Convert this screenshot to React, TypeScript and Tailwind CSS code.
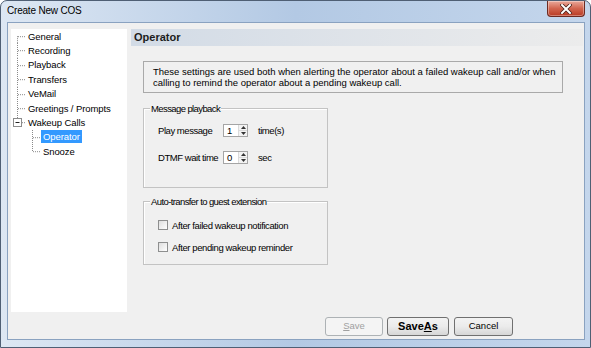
import React from "react";

const font = "font-['Liberation_Sans',Arial,sans-serif]";

type Node = { label: string; level: number; line: "first" | "mid" | "last"; box?: boolean; selected?: boolean };

const tree: Node[] = [
  { label: "General", level: 0, line: "first" },
  { label: "Recording", level: 0, line: "mid" },
  { label: "Playback", level: 0, line: "mid" },
  { label: "Transfers", level: 0, line: "mid" },
  { label: "VeMail", level: 0, line: "mid" },
  { label: "Greetings / Prompts", level: 0, line: "mid" },
  { label: "Wakeup Calls", level: 0, line: "last", box: true },
  { label: "Operator", level: 1, line: "mid", selected: true },
  { label: "Snooze", level: 1, line: "last" },
];

function Connector({ line, box }: { line: Node["line"]; box?: boolean }) {
  const y1 = line === "first" ? "50%" : "0";
  const y2 = line === "last" ? "50%" : "100%";
  return (
    <svg width="15" height="100%" className="h-full shrink-0">
      <line x1="6.5" y1={y1} x2="6.5" y2={y2} stroke="#8a8a8a" strokeDasharray="1 1" />
      <line x1="7" y1="50%" x2="15" y2="50%" stroke="#8a8a8a" strokeDasharray="1 1" transform="translate(0 0.5)" />
      {box && (
        <g>
          <rect x="2.5" y="3.5" width="8" height="8" fill="#fff" stroke="#8c8c8c" />
          <line x1="4.5" y1="7.5" x2="8.5" y2="7.5" stroke="#222" />
        </g>
      )}
    </svg>
  );
}

function Spinner({ value }: { value: string }) {
  return (
    <div className="flex h-[13px] w-[25px] border border-[#a5a5a5] bg-white">
      <span className="flex-1 pl-[3px] text-[9.5px] leading-[11px] text-black">{value}</span>
      <div className="flex w-[9px] flex-col border-l border-[#dadada] bg-[#f3f3f3]">
        <div className="flex flex-1 items-center justify-center border-b border-[#dadada]">
          <svg width="5" height="3"><path d="M0 3 L2.5 0 L5 3 Z" fill="#333" /></svg>
        </div>
        <div className="flex flex-1 items-center justify-center">
          <svg width="5" height="3"><path d="M0 0 L2.5 3 L5 0 Z" fill="#333" /></svg>
        </div>
      </div>
    </div>
  );
}

function Check({ label }: { label: string }) {
  return (
    <div className="flex h-[12px] items-center pl-[14px]">
      <div className="h-[10px] w-[10px] border border-[#8e8f8f] bg-gradient-to-br from-[#dedede] to-white" />
      <span className="ml-[4px] text-[9.5px] leading-[11px] tracking-[-0.4px] text-black">{label}</span>
    </div>
  );
}

export default function App() {
  return (
    <div className={`${font} flex h-[348px] w-[591px] flex-col overflow-hidden rounded-t-[7px] border border-[#4f5f74] bg-gradient-to-r from-[#dde7f3] via-[#b3c9e4] to-[#c4d6ec]`}>
      {/* title bar */}
      <div className="flex h-[21px] shrink-0 items-start justify-between pl-[6px] pr-[5px]">
        <span className="mt-[4px] text-[10px] leading-[12px] tracking-[-0.2px] text-black">Create New COS</span>
        <div className="flex h-[16px] w-[38px] items-center justify-center rounded-b-[4px] border border-t-0 border-[#6d2a22] bg-gradient-to-b from-[#e9a99b] via-[#d2654f] to-[#b83a23] shadow-[inset_0_0_0_1px_rgba(255,255,255,0.35)]">
          <svg width="12" height="10" viewBox="0 0 12 10">
            <path d="M2 1 L10 9 M10 1 L2 9" stroke="#4a1f18" strokeWidth="3.6" strokeLinecap="square" />
            <path d="M2 1 L10 9 M10 1 L2 9" stroke="#fff" strokeWidth="2" strokeLinecap="square" />
          </svg>
        </div>
      </div>

      {/* client area */}
      <div className="mb-[7px] ml-[6px] mr-[5px] flex flex-1 flex-col border border-[#8aa2c0] bg-[#f0f0f0] pl-[3px] pr-[1px] pt-[6px]">
        <div className="flex h-[283px] gap-[4px]">
          {/* tree */}
          <div className="w-[116px] bg-white">
            {tree.map((n) => (
              <div key={n.label} className="flex h-[14.4px] items-center">
                {n.level === 1 && <div className="w-[15px] shrink-0" />}
                <Connector line={n.line} box={n.box} />
                <span
                  className={`px-[2px] text-[9.5px] leading-[13px] tracking-[-0.1px] ${
                    n.selected ? "bg-[#3399ff] text-white" : "text-black"
                  }`}
                >
                  {n.label}
                </span>
              </div>
            ))}
          </div>

          {/* page */}
          <div className="flex w-[452px] flex-col">
            <div className="flex h-[17px] items-center bg-gradient-to-r from-[#d2dbe6] to-[#ececec] pl-[3px]">
              <span className="text-[11px] font-bold leading-[13px] text-[#1c1c1c]">Operator</span>
            </div>

            <div className="ml-[12px] mt-[15px] h-[32px] w-[420px] border border-[#a9a9a9] pl-[9px] pt-[4px] text-[9.5px] leading-[11px] text-black">
              These settings are used both when alerting the operator about a failed wakeup call and/or when
              <br />
              calling to remind the operator about a pending wakeup call.
            </div>

            <div className="ml-[12px] mt-[15px] h-[80px] w-[185px] border border-[#c3c3c3] shadow-[inset_1px_1px_0_#fff]">
              <span className="ml-[6px] -mt-[6px] block w-fit bg-[#f0f0f0] px-[1px] text-[9.5px] leading-[11px] tracking-[-0.6px] text-black">
                Message playback
              </span>
              <div className="mt-[10px] flex h-[13px] items-center pl-[14px] text-[9.5px] leading-[11px] tracking-[-0.45px] text-black">
                <span className="w-[65px]">Play message</span>
                <Spinner value="1" />
                <span className="ml-[10px]">time(s)</span>
              </div>
              <div className="mt-[14px] flex h-[13px] items-center pl-[14px] text-[9.5px] leading-[11px] tracking-[-0.45px] text-black">
                <span className="w-[65px]">DTMF wait time</span>
                <Spinner value="0" />
                <span className="ml-[10px]">sec</span>
              </div>
            </div>

            <div className="ml-[12px] mt-[13px] h-[64px] w-[185px] border border-[#c3c3c3] shadow-[inset_1px_1px_0_#fff]">
              <span className="ml-[6px] -mt-[6px] block w-fit bg-[#f0f0f0] px-[1px] text-[9.5px] leading-[11px] tracking-[-0.6px] text-black">
                Auto-transfer to guest extension
              </span>
              <div className="mt-[12px]">
                <Check label="After failed wakeup notification" />
              </div>
              <div className="mt-[10px]">
                <Check label="After pending wakeup reminder" />
              </div>
            </div>
          </div>
        </div>

        {/* buttons */}
        <div className="ml-[314px] mt-[5px] flex h-[19px]">
          <button className="h-[19px] w-[58px] rounded-[3px] border border-[#adb2b5] bg-[#f4f4f4] text-[9.5px] text-[#a0a0a0]">
            <span className="underline decoration-[#a0a0a0]">S</span>ave
          </button>
          <button className="ml-[4px] h-[19px] w-[62px] rounded-[3px] border border-[#707070] bg-gradient-to-b from-[#f3f3f3] via-[#ebebeb] to-[#d6d6d6] text-[11px] font-bold text-black">
            Save<span className="underline">A</span>s
          </button>
          <button className="ml-[5px] h-[19px] w-[59px] rounded-[3px] border border-[#707070] bg-gradient-to-b from-[#f3f3f3] via-[#ebebeb] to-[#d6d6d6] text-[9.5px] text-black">
            Cancel
          </button>
        </div>
      </div>
    </div>
  );
}
